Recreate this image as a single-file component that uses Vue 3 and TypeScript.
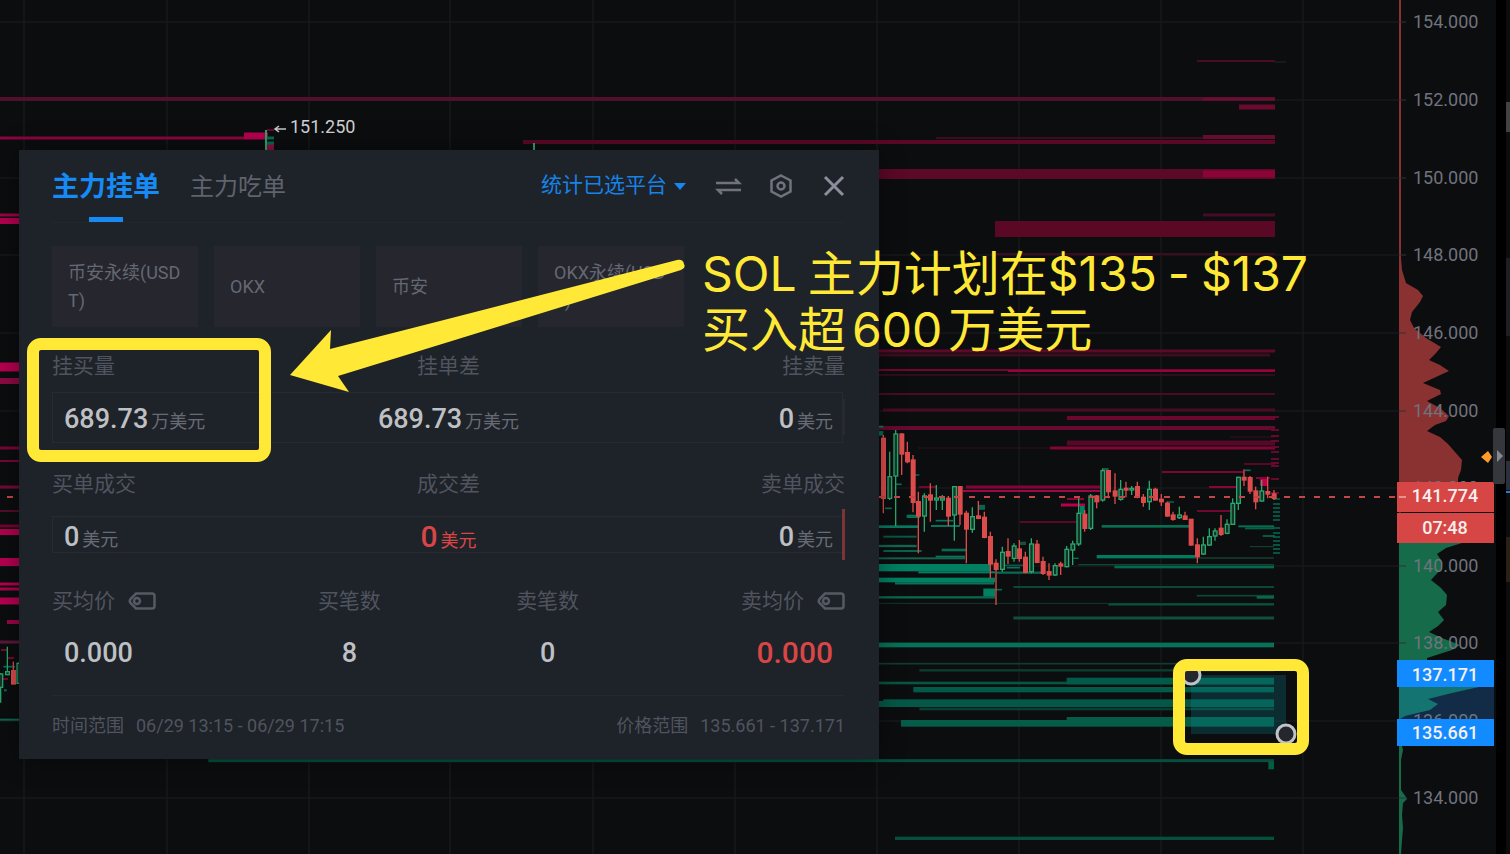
<script setup lang="ts">
import { ref } from 'vue'

type Bar = [number, number, number, number, string]
type Candle = [number, number, number, number, number, number]

const gridX = [24, 167, 309, 450, 593, 735, 877, 1019, 1161, 1303]
const gridY = [22, 100, 178, 255, 333, 411, 488, 566, 643, 721, 798]
const prices = ['154.000', '152.000', '150.000', '148.000', '146.000', '144.000', '142.000', '140.000', '138.000', '136.000', '134.000']

// Resting orders on the sell side: x1, x2, centre y, thickness, colour
const asks: Bar[] = [
  [1197, 1275, 61, 2, '#4b0b25'], [1275, 1286, 62, 1, '#23282a'],
  [0, 1275, 99, 4, '#491329'], [0, 1275, 98, 1, '#620c32'], [1203, 1275, 99, 3, '#6a0f33'], [1239, 1275, 107, 5, '#6b0a2f'],
  [0, 244, 138, 3, '#8c053e'], [244, 268, 136, 7, '#b5004f'], [267, 274, 130, 2, '#700030'], [267, 274, 147, 6, '#8c1145'],
  [523, 1275, 142, 4, '#5b0828'], [936, 1275, 138, 2, '#3d0d1f'], [1203, 1275, 137, 4, '#690b31'],
  [879, 1275, 174, 10, '#5c0827'], [1203, 1275, 174, 7, '#8b0438'],
  [1203, 1275, 215, 3, '#480b25'], [995, 1275, 229, 16, '#5b0824'], [995, 1275, 254, 2, '#3b0d20'],
  [879, 1275, 351, 3, '#5c0a2a'], [879, 1270, 355, 3, '#3c0d1f'],
  [879, 1275, 370, 2, '#720730'], [1008, 1275, 371, 2, '#94053c'], [879, 1275, 375, 2, '#310d1b'],
  [879, 1275, 394, 2, '#4b0b26'], [883, 1275, 410, 3, '#4c0b24'],
  [1067, 1275, 418, 4, '#6e072e'], [879, 1275, 428, 4, '#680930'],
  [1067, 1275, 443, 5, '#540928'], [918, 1050, 448, 1, '#34101c'], [1050, 1275, 448, 3, '#830537'],
  [1162, 1244, 472, 2, '#7a0632'], [966, 1100, 487, 3, '#840437'], [963, 1100, 491, 2, '#a4044a'],
  [919, 936, 487, 2, '#76062e'], [1209, 1240, 487, 2, '#8b0438'], [1061, 1085, 505, 3, '#bb0049'],
  [1067, 1084, 499, 2, '#8d0438'], [1020, 1080, 522, 2, '#560a27'], [1197, 1232, 511, 2, '#710630'],
  [0, 19, 215, 3, '#9c0445'], [0, 19, 221, 6, '#b5004f'], [0, 19, 367, 9, '#b5004f'], [0, 19, 381, 6, '#8c0a41'],
  [0, 19, 448, 3, '#790636'], [0, 19, 461, 2, '#790636'], [0, 19, 487, 3, '#740839'], [0, 19, 511, 2, '#501025'],
  [0, 19, 526, 3, '#6f0632'], [0, 19, 532, 6, '#b5004f'], [0, 19, 562, 8, '#b5004f'], [0, 19, 584, 3, '#b5004f'],
  [0, 19, 589, 3, '#ac034a'], [0, 19, 601, 7, '#b5004f'], [7, 19, 622, 4, '#9c0445'], [0, 19, 642, 3, '#5c1738'],
  [1, 8, 650, 2, '#79082e'], [7, 14, 658, 2, '#79082e'], [0, 8, 679, 2, '#79082e'],
  [1260, 1268, 482, 8, '#c30048'], [1256, 1270, 478, 2, '#82043a'], [1230, 1275, 437, 1, '#3c0d20'], [1244, 1275, 464, 2, '#560927'],
]

// Buy side; coordinates in the zoomed plot frame
const bids: Bar[] = [
  [25, 40, 20, 6, '#087a5d'], [25, 40, 40, 14, '#08684e'], [25, 145, 320, 8, '#08795f'], [40, 140, 350, 6, '#0a5847'],
  [25, 140, 378, 7, '#126750'], [40, 155, 393, 6, '#08624c'], [215, 290, 390, 8, '#086a52'], [25, 285, 415, 6, '#17604b'],
  [197, 285, 410, 6, '#087358'], [25, 362, 443, 22, '#007f61'], [145, 375, 457, 6, '#008064'], [380, 520, 458, 7, '#086652'],
  [390, 466, 436, 5, '#075849'], [410, 450, 443, 5, '#087158'], [25, 375, 480, 14, '#008061'], [75, 372, 490, 7, '#087159'],
  [340, 375, 518, 25, '#008061'], [25, 375, 532, 7, '#0b6650'], [375, 396, 509, 5, '#08674e'], [25, 715, 550, 3, '#15372e'],
  [715, 1212, 553, 7, '#09523e'], [430, 1212, 501, 5, '#0e5141'], [980, 1212, 527, 5, '#0a4a39'], [1160, 1212, 532, 8, '#09664e'],
  [430, 1212, 594, 9, '#114e3e'], [25, 1212, 675, 14, '#067257'], [680, 976, 410, 10, '#007d61'], [976, 1212, 414, 5, '#16382f'],
  [625, 1212, 434, 4, '#0b4837'], [733, 1212, 441, 8, '#08664e'], [695, 960, 319, 8, '#086e52'], [1105, 1212, 319, 6, '#086e52'],
  [1125, 1212, 325, 6, '#086049'], [183, 270, 318, 6, '#07735a'], [197, 250, 302, 5, '#07735a'], [110, 150, 289, 10, '#087158'],
  [1178, 1215, 348, 5, '#08664e'], [1140, 1212, 380, 3, '#13493b'], [325, 345, 262, 15, '#08664e'], [630, 644, 270, 24, '#008061'],
  [890, 912, 246, 4, '#087158'], [700, 716, 147, 5, '#087158'], [1125, 1142, 151, 5, '#087158'], [610, 626, 415, 4, '#087158'],
  [45, 65, 265, 5, '#087158'], [78, 95, 193, 5, '#087158'], [130, 148, 165, 4, '#087158'], [448, 468, 370, 10, '#174f43'],
  [25, 1212, 731, 5, '#123c32'], [148, 1212, 751, 7, '#0a3d31'], [25, 1212, 789, 8, '#075643'], [590, 1212, 783, 20, '#045a48'],
  [130, 1212, 809, 16, '#045a48'], [25, 1212, 852, 18, '#055847'], [40, 1212, 842, 8, '#055847'], [148, 1212, 867, 8, '#083f33'],
  [93, 1212, 910, 20, '#055c49'], [590, 1212, 897, 12, '#055c49'], [-1985, 1212, 1022, 9, '#064f40'], [1195, 1212, 1036, 24, '#055c45'],
  [75, 1212, 1255, 10, '#044f3d'], [-2610, -2553, 899, 6, '#0d6652'], [-2598, -2590, 811, 6, '#087158'], [-2600, -2565, 740, 5, '#087158'],
]

// centre, high, low, body top, body bottom, rising
const candles: Candle[] = [
  [-2608, 760, 848, 762, 802, 1], [-2588, 680, 765, 755, 764, 1], [-2570, 725, 792, 752, 792, 0], [-2554, 728, 792, 730, 790, 1],
  [40, 45, 280, 55, 235, 0], [59, 95, 240, 170, 235, 1], [77, 30, 318, 42, 168, 1], [95, 40, 165, 42, 102, 0],
  [112, 65, 130, 98, 125, 0], [129, 105, 277, 120, 247, 0], [145, 215, 400, 245, 288, 0], [163, 220, 335, 228, 288, 1],
  [181, 190, 305, 225, 240, 0], [199, 195, 270, 234, 240, 1], [217, 225, 270, 234, 240, 1], [235, 228, 318, 235, 288, 0],
  [253, 198, 362, 200, 285, 1], [270, 198, 315, 200, 282, 0], [289, 272, 430, 280, 327, 0], [307, 262, 338, 290, 328, 1],
  [325, 243, 298, 288, 295, 0], [343, 275, 355, 292, 352, 0], [361, 335, 475, 350, 432, 0], [378, 418, 555, 430, 448, 0],
  [397, 380, 455, 397, 448, 1], [414, 355, 432, 395, 408, 0], [432, 370, 425, 378, 415, 1], [448, 360, 425, 387, 415, 0],
  [466, 395, 460, 412, 457, 0], [484, 355, 460, 372, 455, 1], [501, 360, 430, 373, 427, 0], [519, 410, 465, 425, 460, 0],
  [537, 430, 480, 455, 465, 0], [555, 430, 468, 437, 465, 1], [572, 425, 465, 432, 438, 0], [590, 378, 442, 388, 440, 1],
  [608, 362, 435, 372, 390, 1], [626, 235, 378, 280, 372, 1], [644, 270, 335, 283, 325, 0], [662, 222, 330, 228, 325, 1],
  [680, 225, 265, 228, 245, 0], [698, 145, 245, 152, 240, 1], [715, 150, 235, 152, 215, 0], [735, 160, 252, 213, 228, 0],
  [752, 180, 242, 208, 238, 1], [768, 185, 232, 205, 210, 0], [785, 198, 225, 205, 210, 1], [802, 185, 235, 200, 230, 0],
  [820, 222, 260, 232, 247, 0], [838, 182, 270, 208, 245, 1], [856, 203, 242, 208, 240, 0], [874, 222, 258, 238, 245, 0],
  [892, 245, 290, 250, 288, 0], [909, 275, 302, 285, 298, 0], [928, 260, 297, 285, 293, 1], [945, 275, 300, 288, 298, 0],
  [963, 297, 377, 298, 375, 0], [982, 355, 430, 375, 410, 0], [1000, 350, 405, 375, 402, 1], [1018, 325, 378, 350, 375, 1],
  [1035, 325, 362, 333, 348, 1], [1053, 285, 348, 325, 343, 0], [1071, 298, 343, 313, 340, 1], [1088, 235, 315, 250, 313, 1],
  [1105, 170, 270, 172, 250, 1], [1122, 148, 198, 172, 180, 0], [1140, 168, 222, 173, 213, 0], [1157, 200, 268, 213, 245, 0],
  [1175, 180, 245, 213, 243, 1], [1193, 170, 235, 215, 222, 0], [1212, 210, 240, 222, 235, 0],
]

const askTicks = [416, 429, 435, 440, 446, 451, 458, 462, 465, 478, 492]
const bidTicks = [498, 503, 507, 511, 515, 519, 527, 532, 536, 540, 544, 548, 552]

const platforms = ['币安永续(USDT)', 'OKX', '币安', 'OKX永续(USDT)']
const tabs = ['主力挂单', '主力吃单']
const activeTab = ref(0)
const open = ref(true)
</script>

<template>
  <main class="screen">
    <svg class="chart" viewBox="0 0 1510 854" preserveAspectRatio="xMaxYMin slice" role="img" aria-label="SOL K线与挂单热力图">
      <g stroke="#1b1e20" stroke-width="1">
        <line v-for="x in gridX" :key="'x' + x" :x1="x" :x2="x" y1="0" y2="854" />
        <line v-for="y in gridY" :key="'y' + y" x1="0" x2="1399" :y1="y" :y2="y" />
      </g>
      <rect v-for="(b, i) in asks" :key="'a' + i" :x="b[0]" :y="b[2] - b[3] / 2" :width="b[1] - b[0]" :height="b[3]" :fill="b[4]" />
      <rect v-for="y in askTicks" :key="'at' + y" x="1271" :y="y" width="8" height="2" fill="#650a2e" />
      <rect v-for="y in bidTicks" :key="'bt' + y" x="1273" :y="y" width="7" height="2" fill="#075342" />
      <g transform="translate(870 420) scale(0.33333)">
        <rect v-for="(b, i) in bids" :key="'b' + i" :x="b[0]" :y="b[2] - b[3] / 2" :width="b[1] - b[0]" :height="b[3]" :fill="b[4]" />
        <g v-for="(c, i) in candles" :key="'c' + i" :stroke="c[5] ? '#2ba66c' : '#dc4c4c'" stroke-width="4">
          <line :x1="c[0]" :x2="c[0]" :y1="c[1]" :y2="c[2]" />
          <rect :x="c[0] - 5" :y="c[3]" width="11" :height="c[4] - c[3]" :fill="c[5] ? '#12372a' : '#dc4c4c'" />
        </g>
      </g>
      <line x1="266" x2="266" y1="130" y2="150" stroke="#2ba66c" stroke-width="2" />
      <path d="M267 138h7M267 143h7" stroke="#0a6a4e" stroke-width="3" />
      <line x1="534" x2="534" y1="143" y2="150" stroke="#2ba66c" stroke-width="2" />
      <path d="M286 129H275M279 126l-4 3 4 3" fill="none" stroke="#c6c8ca" stroke-width="1.5" />
      <text x="290" y="133" class="tick bright">151.250</text>
      <line x1="7" x2="13" y1="497" y2="497" stroke="#c34845" stroke-width="2" />
      <line x1="879" x2="1399" y1="497" y2="497" stroke="#c34845" stroke-width="2" stroke-dasharray="6 9" />
      <rect x="1191" y="675" width="95" height="59" fill="#078c96" fill-opacity="0.25" />
      <g fill="#24272e" stroke="#bfc3c8" stroke-width="3">
        <circle cx="1191" cy="675" r="9" />
        <circle cx="1286" cy="734" r="9" />
      </g>

      <line x1="1400" x2="1400" y1="0" y2="854" stroke="#32383a" stroke-width="2" />
      <path d="M1399 0H1401V258L1402 270 1406 283 1418 290 1423 296 1420 302 1412 312 1410 320 1414 328 1426 338 1441 347 1436 353 1429 360 1440 365 1449 371 1436 377 1423 383 1440 390 1441 394 1427 401 1440 408 1449 416 1446 421 1435 425 1427 431 1440 437 1448 444 1455 452 1462 460 1461 470 1458 478V482H1399Z" fill="#8a3132" />
      <path d="M1399 543H1462L1446 548 1437 554 1441 560 1442 568 1431 580 1441 588 1447 595 1446 605 1438 612 1444 620 1438 626 1429 632 1442 638 1460 645 1452 650 1427 658V661H1399Z" fill="#166b4a" />
      <rect x="1399" y="687" width="95" height="32" fill="#122c48" />
      <path d="M1399 687H1479L1452 693 1428 699 1438 704 1430 710 1405 716 1400 719H1399Z" fill="#137472" />
      <path d="M1399 746H1402L1403 750 1401 760V790L1406 797 1407 799 1403 803 1402 815 1403 828 1402 840 1401 854H1399Z" fill="#166b4a" />
      <g v-for="(p, i) in prices" :key="p">
        <line x1="1399" x2="1406" :y1="gridY[i]" :y2="gridY[i]" stroke="#303538" stroke-width="1" />
        <text x="1413" :y="gridY[i] + 6" class="tick">{{ p }}</text>
      </g>
      <rect x="1397" y="482" width="97" height="30" fill="#d64645" />
      <rect x="1397" y="513" width="97" height="30" fill="#d64645" />
      <line x1="1399" x2="1406" y1="497" y2="497" stroke="#f4dede" stroke-width="1" />
      <rect x="1397" y="660" width="97" height="27" fill="#118bff" />
      <rect x="1397" y="719" width="97" height="27" fill="#118bff" />
      <g class="flags">
        <text x="1445" y="502">141.774</text>
        <text x="1445" y="534">07:48</text>
        <text x="1445" y="681">137.171</text>
        <text x="1445" y="739">135.661</text>
      </g>
      <rect x="1496" y="0" width="10" height="854" fill="#000" />
      <rect x="1506" y="102" width="4" height="30" fill="#404244" />
      <rect x="1506" y="258" width="4" height="78" fill="#1d1f22" />
      <rect x="1506" y="461" width="4" height="29" fill="#2a313a" />
      <rect x="1506" y="491" width="4" height="2" fill="#267bd8" />
      <rect x="1506" y="537" width="4" height="45" fill="#2a2115" />
      <rect x="1493" y="428" width="12" height="56" rx="2" fill="#36373d" />
      <path d="M1497 450l6 6-6 6z" fill="#858992" />
      <path d="M1481 457l7-6 4 6-4 6z" fill="#ff9a2b" />
    </svg>

    <section v-if="open" class="panel" aria-label="主力挂单统计">
      <header class="head">
        <nav class="tabs">
          <button v-for="(t, i) in tabs" :key="t" type="button" class="tab" :class="{ active: i === activeTab }" @click="activeTab = i">{{ t }}</button>
        </nav>
        <div class="tools">
          <label class="picker">
            <select aria-label="统计平台">
              <option>统计已选平台</option>
            </select>
            <svg width="12" height="8" viewBox="0 0 12 8"><path d="M0 1h12L6 8z" fill="#1688f0" /></svg>
          </label>
          <button type="button" class="icon" aria-label="切换">
            <svg width="22" height="24" viewBox="0 0 22 24"><path d="M-1 9H22L18 5M24 16H1L5 20" /></svg>
          </button>
          <button type="button" class="icon" aria-label="设置">
            <svg width="22" height="24" viewBox="0 0 22 24"><path d="M11 1.500l9.500 5v11l-9.500 5-9.500-5v-11z" /><circle cx="11" cy="12" r="3.500" /></svg>
          </button>
          <button type="button" class="icon close" aria-label="关闭" @click="open = false">
            <svg width="22" height="24" viewBox="0 0 22 24"><path d="M2 3l18 18M20 3l-18 18" /></svg>
          </button>
        </div>
      </header>

      <div class="chips">
        <button v-for="p in platforms" :key="p" type="button" class="chip">{{ p }}</button>
      </div>

      <div class="labels three first"><span>挂买量</span><span>挂单差</span><span>挂卖量</span></div>
      <div class="meter tall">
        <p><b>689.73</b><small>万美元</small></p>
        <p><b>689.73</b><small>万美元</small></p>
        <p><b>0</b><small>美元</small></p>
      </div>

      <div class="labels three second"><span>买单成交</span><span>成交差</span><span>卖单成交</span></div>
      <div class="meter short">
        <p><b>0</b><small>美元</small></p>
        <p class="down"><b>0</b><small>美元</small></p>
        <p><b>0</b><small>美元</small></p>
      </div>

      <div class="labels four">
        <span>买均价<svg class="tag" width="28" height="18" viewBox="0 0 28 18"><path d="M8 1.500h16a2.500 2.500 0 0 1 2.500 2.500v10a2.500 2.500 0 0 1-2.500 2.500H8L2.500 11q-1.500-2 0-4z" /><circle cx="9" cy="9" r="3" /></svg></span>
        <span>买笔数</span>
        <span>卖笔数</span>
        <span>卖均价<svg class="tag" width="28" height="18" viewBox="0 0 28 18"><path d="M8 1.500h16a2.500 2.500 0 0 1 2.500 2.500v10a2.500 2.500 0 0 1-2.500 2.500H8L2.500 11q-1.500-2 0-4z" /><circle cx="9" cy="9" r="3" /></svg></span>
      </div>
      <div class="figures"><b>0.000</b><b>8</b><b>0</b><b class="down">0.000</b></div>

      <footer class="foot">
        <p><span>时间范围</span><span>06/29 13:15 - 06/29 17:15</span></p>
        <p><span>价格范围</span><span>135.661 - 137.171</span></p>
      </footer>
    </section>

    <div class="frame volume"></div>
    <div class="frame zone"></div>
    <svg class="arrow" width="396" height="134" viewBox="290 259 396 134">
      <path d="M290 375L331 330 330 349 440 321 677 260Q683 259 684 264 686 268 681 270L455 340 338 376 349 392Z" fill="#ffe936" />
    </svg>
    <div class="note">
      <p class="wide"><span>SOL</span><span>主力计划在<i>$135</i></span><span>-</span><span>$137</span></p>
      <p><span>买入超</span><span>600</span><span>万美元</span></p>
    </div>
  </main>
</template>

<style>
body {
  margin: 0;
  background: #0c0d0f;
}
</style>

<style scoped>
.screen {
  position: relative;
  min-height: 100vh;
  overflow: hidden;
  background: #0c0d0f;
  color: #5c606b;
  font-family: Roboto, "Noto Sans CJK SC", sans-serif;
}
.chart {
  position: absolute;
  inset: 0;
  width: 100%;
  height: 100%;
}
.tick {
  font-size: 18px;
  fill: #70737d;
}
.bright {
  fill: #cfd0d2;
}
.flags {
  font-size: 18px;
  font-weight: 500;
  text-anchor: middle;
  fill: #f6efee;
}
button,
select {
  padding: 0;
  border: 0;
  background: none;
  color: inherit;
  font: inherit;
  cursor: pointer;
}
p {
  margin: 0;
}

.panel {
  position: absolute;
  top: 150px;
  left: 19px;
  box-sizing: border-box;
  width: 860px;
  padding: 0 34px 19px 33px;
  background: #1e2229;
  box-shadow: 0 0 24px rgba(0, 0, 0, 0.4);
}
.head {
  display: flex;
  justify-content: space-between;
  height: 72px;
  border-bottom: 1px solid #23272c;
}
.tabs {
  display: flex;
  gap: 30px;
}
.tab {
  position: relative;
  padding-bottom: 4px;
  font-size: 24px;
  color: #5f636e;
}
.tab.active {
  font-size: 27px;
  font-weight: 700;
  color: #168af5;
}
.tab.active::after {
  content: "";
  position: absolute;
  bottom: 0;
  left: 50%;
  width: 34px;
  height: 5px;
  margin-left: -17px;
  background: #168af5;
}
.tools {
  display: flex;
  align-items: center;
  gap: 31px;
}
.picker {
  display: flex;
  align-items: center;
  gap: 7px;
}
select {
  appearance: none;
  padding-bottom: 2px;
  font-size: 21px;
  color: #1683e6;
}
.icon {
  display: flex;
}
.icon svg,
.tag {
  overflow: visible;
  fill: none;
  stroke: #70737e;
  stroke-width: 2.5;
}
.icon.close svg {
  stroke: #8c8f9b;
  stroke-width: 3;
}
.chips {
  display: flex;
  gap: 16px;
  margin-top: 23px;
}
.chip {
  width: 146px;
  height: 81px;
  padding: 0 16px;
  background: #25262e;
  font-size: 18px;
  line-height: 28px;
  color: #646873;
  text-align: left;
  word-break: break-all;
}
.labels {
  display: grid;
  font-size: 21px;
  line-height: 28px;
  color: #50545e;
}
.three {
  grid-template-columns: repeat(3, 1fr);
}
.four {
  grid-template-columns: repeat(4, 1fr);
  margin-top: 34px;
}
.first {
  margin-top: 25px;
}
.second {
  margin-top: 27px;
}
.labels > * {
  display: flex;
  justify-content: center;
  align-items: center;
  gap: 13px;
}
.labels > :first-child {
  justify-content: flex-start;
}
.labels > :last-child {
  justify-content: flex-end;
}
.tag {
  stroke: #565a65;
}
.meter {
  position: relative;
  display: grid;
  grid-template-columns: repeat(3, 1fr);
  align-items: center;
  box-sizing: border-box;
  margin-right: 2px;
  padding: 2px 9px 0 11px;
  border: 1px solid #272a2e;
}
.meter::after {
  content: "";
  position: absolute;
  right: -3px;
  width: 3px;
  background: #272a2e;
}
.tall {
  height: 51px;
  margin-top: 12px;
}
.tall::after {
  top: 6px;
  height: 36px;
}
.short {
  height: 37px;
  margin-top: 18px;
}
.short::after {
  top: -8px;
  height: 51px;
  background: #7d3437;
}
.meter p {
  display: flex;
  justify-content: center;
  align-items: baseline;
  gap: 3px;
}
.meter p:first-child {
  justify-content: flex-start;
}
.meter p:last-child {
  justify-content: flex-end;
}
b {
  font-size: 27px;
  font-weight: 500;
  line-height: 36px;
  color: #bfc0c3;
}
small {
  font-size: 18px;
  line-height: 28px;
  color: #686b76;
}
.down,
.down b,
.down small {
  color: #d94646;
}
.down b,
b.down {
  font-size: 30px;
}
.figures {
  display: grid;
  grid-template-columns: repeat(4, 1fr);
  margin-top: 20px;
  padding: 0;
  text-align: center;
}
.figures b:first-child {
  padding-left: 12px;
  text-align: left;
}
.figures b:last-child {
  padding-right: 12px;
  text-align: right;
}
.foot {
  display: flex;
  justify-content: space-between;
  margin-top: 24px;
  padding-top: 16px;
  border-top: 1px solid #25282c;
  font-size: 18px;
  line-height: 28px;
  color: #50545f;
}
.foot p {
  display: flex;
  gap: 12px;
}

.frame {
  position: absolute;
  box-sizing: border-box;
  border: 12px solid #ffe936;
  border-radius: 14px;
  pointer-events: none;
}
.volume {
  top: 338px;
  left: 27px;
  width: 244px;
  height: 124px;
}
.zone {
  top: 659px;
  left: 1173px;
  width: 136px;
  height: 96px;
}
.arrow {
  position: absolute;
  top: 259px;
  left: 290px;
  pointer-events: none;
}
.note {
  position: absolute;
  top: 246px;
  left: 702px;
  color: #ffe936;
  font-family: Inter, "Noto Sans CJK SC", sans-serif;
  font-size: 48px;
  line-height: 56px;
  white-space: nowrap;
}
.note p {
  display: flex;
  gap: 6px;
}
.note .wide {
  gap: 11px;
}
.note i {
  font-style: normal;
}
</style>
